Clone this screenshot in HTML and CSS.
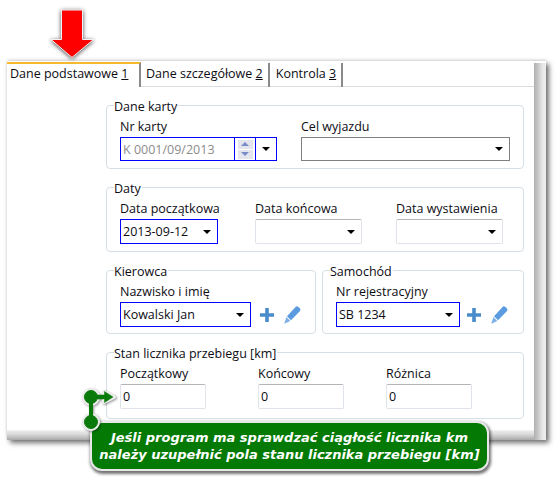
FILE: index.html
```html
<!DOCTYPE html>
<html lang="pl">
<head>
<meta charset="utf-8">
<title>Dane podstawowe</title>
<link rel="stylesheet" href="styles.css">
</head>
<body>
<div class="page">
  <svg class="arrow" width="60" height="62" viewBox="0 0 60 62"><path d="M18.500 10H39.500V39.500H50.500L29 57.500L8 39.500H18.500Z" fill="#f00" stroke="#f2f2f2" stroke-width="1"/></svg>
  <div class="window">
    <div class="main">
      <div class="tabs">
        <div class="tab active">Dane podstawowe <u>1</u></div>
        <div class="tab">Dane szczegółowe <u>2</u></div>
        <div class="tab">Kontrola <u>3</u></div>
      </div>
      <div class="content">
        <fieldset class="group">
          <legend>Dane karty</legend>
          <div class="row row-karta">
            <div class="field">
              <label>Nr karty</label>
              <div class="combo">
                <div class="input blue nr">K 0001/09/2013</div>
                <div class="spin blue"><span class="sbtn"><i class="up"></i></span><span class="sbtn"><i class="down"></i></span></div>
                <div class="drop blue"><i class="caret"></i></div>
              </div>
            </div>
            <div class="field">
              <label>Cel wyjazdu</label>
              <div class="select gray tall24"><span></span><i class="caret"></i></div>
            </div>
          </div>
        </fieldset>
        <fieldset class="group">
          <legend>Daty</legend>
          <div class="row row-daty">
            <div class="field">
              <label>Data początkowa</label>
              <div class="select blue w-dp"><span>2013-09-12</span><i class="caret"></i></div>
            </div>
            <div class="field">
              <label>Data końcowa</label>
              <div class="select light w-dk"><span></span><i class="caret"></i></div>
            </div>
            <div class="field">
              <label>Data wystawienia</label>
              <div class="select light w-dk"><span></span><i class="caret"></i></div>
            </div>
          </div>
        </fieldset>
        <div class="pair">
          <fieldset class="group kier">
            <legend>Kierowca</legend>
            <div class="field">
              <label>Nazwisko i imię</label>
              <div class="withicons">
                <div class="select blue w-kier"><span>Kowalski Jan</span><i class="caret"></i></div>
                <svg class="plus" width="14" height="14" viewBox="0 0 14 14"><path d="M5.200 0H8.800V5.200H14V8.800H8.800V14H5.200V8.800H0V5.200H5.200Z" fill="#4a8ccb"/></svg>
                <svg class="pen" width="17" height="18" viewBox="0 0 17 18"><path d="M12 0.500Q13 0 14.500 1L16 2.600Q17 4 16 5L7 14.200L3 10.200Z" fill="#5b9be0"/><path d="M2.400 11L6.300 15L1 17.600H0.300Z" fill="#7fb1e8"/></svg>
              </div>
            </div>
          </fieldset>
          <fieldset class="group sam">
            <legend>Samochód</legend>
            <div class="field">
              <label>Nr rejestracyjny</label>
              <div class="withicons">
                <div class="select blue w-sam"><span>SB 1234</span><i class="caret"></i></div>
                <svg class="plus" width="14" height="14" viewBox="0 0 14 14"><path d="M5.200 0H8.800V5.200H14V8.800H8.800V14H5.200V8.800H0V5.200H5.200Z" fill="#4a8ccb"/></svg>
                <svg class="pen" width="17" height="18" viewBox="0 0 17 18"><path d="M12 0.500Q13 0 14.500 1L16 2.600Q17 4 16 5L7 14.200L3 10.200Z" fill="#5b9be0"/><path d="M2.400 11L6.300 15L1 17.600H0.300Z" fill="#7fb1e8"/></svg>
              </div>
            </div>
          </fieldset>
        </div>
        <fieldset class="group group-stan">
          <legend>Stan licznika przebiegu [km]</legend>
          <div class="row row-stan">
            <div class="field"><label>Początkowy</label><div class="input light w-num">0</div></div>
            <div class="field"><label>Końcowy</label><div class="input light w-num">0</div></div>
            <div class="field"><label>Różnica</label><div class="input light w-num">0</div></div>
          </div>
        </fieldset>
      </div>
      <div class="bottombar"></div>
    </div>
    <div class="scrollbar"></div>
  </div>
  <svg class="pointer" width="46" height="56" viewBox="0 0 46 56">
    <g fill="#ececec" stroke="#ececec" stroke-width="4">
      <path d="M10 16V41M10 16H23V11L33 16L23 21V16" stroke-linejoin="round"/>
      <circle cx="10" cy="16" r="7"/><circle cx="10" cy="41" r="7"/>
    </g>
    <g fill="#0a7a0a" stroke="#0a7a0a">
      <path d="M10 16V41" stroke-width="4"/>
      <path d="M16 14H23.500V10.500L32 16L23.500 21.500V18H16Z" stroke-width="0.500"/>
      <circle cx="10" cy="16" r="6.500"/><circle cx="10" cy="41" r="6.500"/>
    </g>
  </svg>
  <div class="callout">Jeśli program ma sprawdzać ciągłość licznika km<br>należy uzupełnić pola stanu licznika przebiegu [km]</div>
</div>
</body>
</html>
```
FILE: styles.css
```css
* { box-sizing: border-box; }
html, body { margin: 0; padding: 0; background: #fff; }
body { font-family: "Open Sans", "Noto Sans", sans-serif; font-size: 12.5px; color: #0c0c14; }
.page { position: relative; width: 558px; height: 481px; overflow: hidden; padding: 61px 0 0 7px; }

.arrow { position: absolute; left: 43px; top: 0; filter: drop-shadow(0 1px 2px rgba(0,0,0,.7)); z-index: 2; }

.window { display: flex; width: 539px; height: 379px; background: #fff; box-shadow: 3px 3px 5px rgba(0,0,0,.55), 0 -1px 3px rgba(0,0,0,.15); }
.main { flex: 1; display: flex; flex-direction: column; min-width: 0; }
.scrollbar { width: 12px; background: linear-gradient(90deg, #b0b0b0, #c8c8c8 35%, #e6e6e6 70%, #f0f0f0); margin-top: 2px; }

.tabs { display: flex; height: 26px; border-bottom: 1px solid #d9dde0; padding-top: 1px; flex: none; }
.tab { height: 24px; margin-top: 1px; padding: 1px 5px 0 5px; line-height: 20px; border-right: 2px solid #8a8a8a; white-space: nowrap; }
.tab:last-child { padding-left: 6px; }
.tab.active { height: 25px; margin-top: 0; width: 134px; padding: 1px 0 0 3px; border-top: 2px solid #f5b92e; line-height: 18px; background: #fff; }

.content { flex: 1; padding: 8px 10px 0 99px; display: flex; flex-direction: column; gap: 8px; }
.group { margin: 0; padding: 0 13px 7px; border: 1px solid #d5dfe6; border-radius: 4px; min-width: 0; }
.group-stan { padding-bottom: 9px; }
.group legend { padding: 4px 1px 0 0; margin-left: -6px; line-height: 16px; background: #fff; }
.field { display: flex; flex-direction: column; }
.field label { line-height: 16px; height: 16px; margin-bottom: 2px; margin-top: 4px; white-space: nowrap; }

.row { display: grid; }
.row-karta { grid-template-columns: 181px 209px; }
.row-daty { grid-template-columns: 135px 141px 107px; }
.row-stan { grid-template-columns: 138px 128px 86px; }

.select, .input { height: 25px; display: flex; align-items: center; background: #fff; }
.select { justify-content: space-between; padding: 0 6px 0 2px; }
.input { padding-left: 2px; }
.blue { border: 1px solid #0000ff; }
.gray { border: 1px solid #808080; }
.light { border: 1px solid #dfe3ea; border-top-color: #b5b5b5; border-radius: 2px; }
.tall24 { height: 24px; }

.caret { display: block; width: 0; height: 0; border: 4px solid transparent; border-top: 4px solid #000; border-bottom: 0; flex: none; }

.combo { display: flex; height: 24px; width: 157px; }
.combo .input { height: 24px; width: 114px; border-right: 0; color: #8c8c8c; }
.spin { width: 22px; height: 24px; display: flex; flex-direction: column; align-items: center; justify-content: center; gap: 1px; padding: 0 1px; }
.sbtn { width: 15px; height: 9px; background: #e4e4ec; display: flex; align-items: center; justify-content: center; }
.up, .down { display: block; width: 0; height: 0; border: 4px solid transparent; border-top: 0; border-bottom: 4px solid #7a8cc8; }
.down { border-bottom: 0; border-top: 4px solid #7a8cc8; }
.drop { width: 21px; height: 24px; border-left: 0; display: flex; align-items: center; justify-content: center; }

.w-dp { width: 98px; }
.w-dk { width: 107px; }
.w-kier { width: 131px; }
.w-sam { width: 124px; }
.w-num { width: 86px; }

.pair { display: flex; gap: 6px; }
.pair .group { padding-bottom: 6px; }
.kier { width: 210px; }
.sam { flex: 1; }
.withicons { display: flex; align-items: center; }
.plus { margin-left: 9px; }
.sam .plus { margin-left: 7px; }
.pen { margin-left: 10px; }

.bottombar { height: 10px; flex: none; background: linear-gradient(180deg, #f2f2f2, #d8d8d8 45%, #a8a8a8); }

.pointer { position: absolute; left: 81px; top: 381px; filter: drop-shadow(1px 1px 1px rgba(0,0,0,.4)); z-index: 3; }
.callout { position: absolute; left: 90px; top: 421px; width: 399px; height: 50px; padding-top: 6px; background: #047a04; border: 2px solid #e8e8e8; border-radius: 12px; box-shadow: 1px 2px 3px 1px rgba(0,0,0,.55); color: #fff; font-family: "DejaVu Sans", sans-serif; font-size: 13px; font-weight: bold; font-style: italic; line-height: 17px; text-align: center; white-space: nowrap; z-index: 2; }
```
